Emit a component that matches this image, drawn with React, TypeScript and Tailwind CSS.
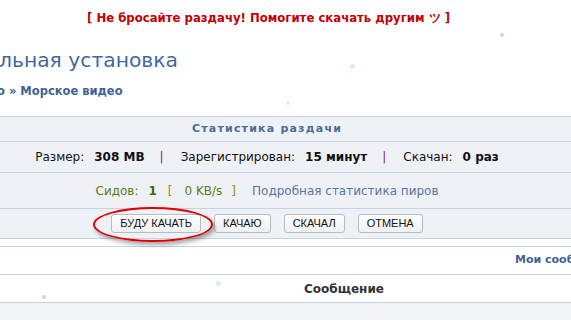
import React from "react";

const buttons = ["БУДУ КАЧАТЬ", "КАЧАЮ", "СКАЧАЛ", "ОТМЕНА"];

// snow dots drawn over the page
const snow = [
  { x: 500, y: 33, s: 4, c: "#c9d9ea" },
  { x: 350, y: 64, s: 5, c: "#d3f0f6" },
  { x: 286, y: 101, s: 4, c: "#e2eef4" },
  { x: 42, y: 295, s: 4, c: "#c9d9ea" },
  { x: 216, y: 281, s: 5, c: "#d3f0f6" },
];

export default function App() {
  return (
    <div className="relative w-[571px] h-[320px] overflow-hidden bg-white font-['Verdana','DejaVu_Sans',sans-serif]">
      <div className="h-[36px] pt-[10px] pl-[87px] text-[11.7px] font-bold leading-[16px] text-[#c40000] whitespace-nowrap">
        [ Не бросайте раздачу! Помогите скачать другим ツ ]
      </div>

      <h1 className="h-[44px] pt-[11px] -ml-[1px] text-[20.3px] leading-[26px] text-[#3f699d] whitespace-nowrap">
        льная установка
      </h1>

      <div className="h-[36px] pt-[4px] -ml-[3px] text-[11.5px] font-bold leading-[14px] text-[#3d6296] whitespace-nowrap">
        о » Морское видео
      </div>

      <div className="-ml-[150px] w-[834px] text-[12px]">
        <div className="h-[26px] border-y border-[#c3d3df] bg-[#eef2f6] flex items-center justify-center text-[11px] font-bold tracking-[1.2px] text-[#4a6d9c]">
          Статистика раздачи
        </div>
        <div className="h-[31px] border-b border-[#c3d3df] bg-[#eef2f6] flex items-center justify-center text-[#111] whitespace-nowrap">
          <span>Размер:</span>
          <b className="ml-[10px]">308 MB</b>
          <span className="ml-[15px] mr-[17px] text-[#8a1a6a]">|</span>
          <span>Зарегистрирован:</span>
          <b className="ml-[10px]">15 минут</b>
          <span className="ml-[15px] mr-[17px] text-[#8a1a6a]">|</span>
          <span>Скачан:</span>
          <b className="ml-[10px]">0 раз</b>
        </div>
        <div className="h-[36px] border-b border-[#c3d3df] bg-[#eef2f6] flex items-center justify-center whitespace-nowrap">
          <span className="text-[#5f7a16]">Сидов:</span>
          <b className="ml-[10px] text-[#3a6a08]">1</b>
          <span className="ml-[11px] text-[#a08a00]">[</span>
          <span className="ml-[12px] text-[#5f7a16]">0 KB/s</span>
          <span className="ml-[9px] text-[#a08a00]">]</span>
          <span className="ml-[16px] text-[#5a75a2]">Подробная статистика пиров</span>
        </div>
        <div className="h-[30px] border-b border-[#c3d3df] bg-[#eef2f6] flex items-center justify-center gap-[13px]">
          {buttons.map((b) => (
            <div
              key={b}
              className="h-[19px] px-[8px] flex items-center rounded-[3px] border border-[#b4bcc4] bg-gradient-to-b from-white to-[#f0f0f0] text-[11px] text-[#111] font-['Liberation_Sans',sans-serif] whitespace-nowrap"
            >
              {b}
            </div>
          ))}
        </div>
        <div className="h-[7px] bg-white" />
        <div className="h-[29px] border-y border-[#c3d3df] bg-white flex items-center pl-[665px] text-[11px] font-bold text-[#3d6296] whitespace-nowrap">
          Мои сообщения
        </div>
        <div className="h-[28px] border-b border-[#c3d3df] bg-white flex items-center">
          <div className="w-[154px]" />
          <div className="flex-1 text-center font-bold text-[#333]">Сообщение</div>
        </div>
        <div className="h-[40px] bg-[#f1f3f5]" />
      </div>

      <div className="absolute left-[93px] top-[207px] w-[120px] h-[35px] rounded-[50%] border-2 border-[#e00000] shadow-[2px_3px_4px_rgba(0,0,0,0.35)]" />

      {snow.map((d, i) => (
        <div
          key={i}
          className="absolute rounded-full"
          style={{ left: d.x, top: d.y, width: d.s, height: d.s, background: d.c }}
        />
      ))}
    </div>
  );
}
